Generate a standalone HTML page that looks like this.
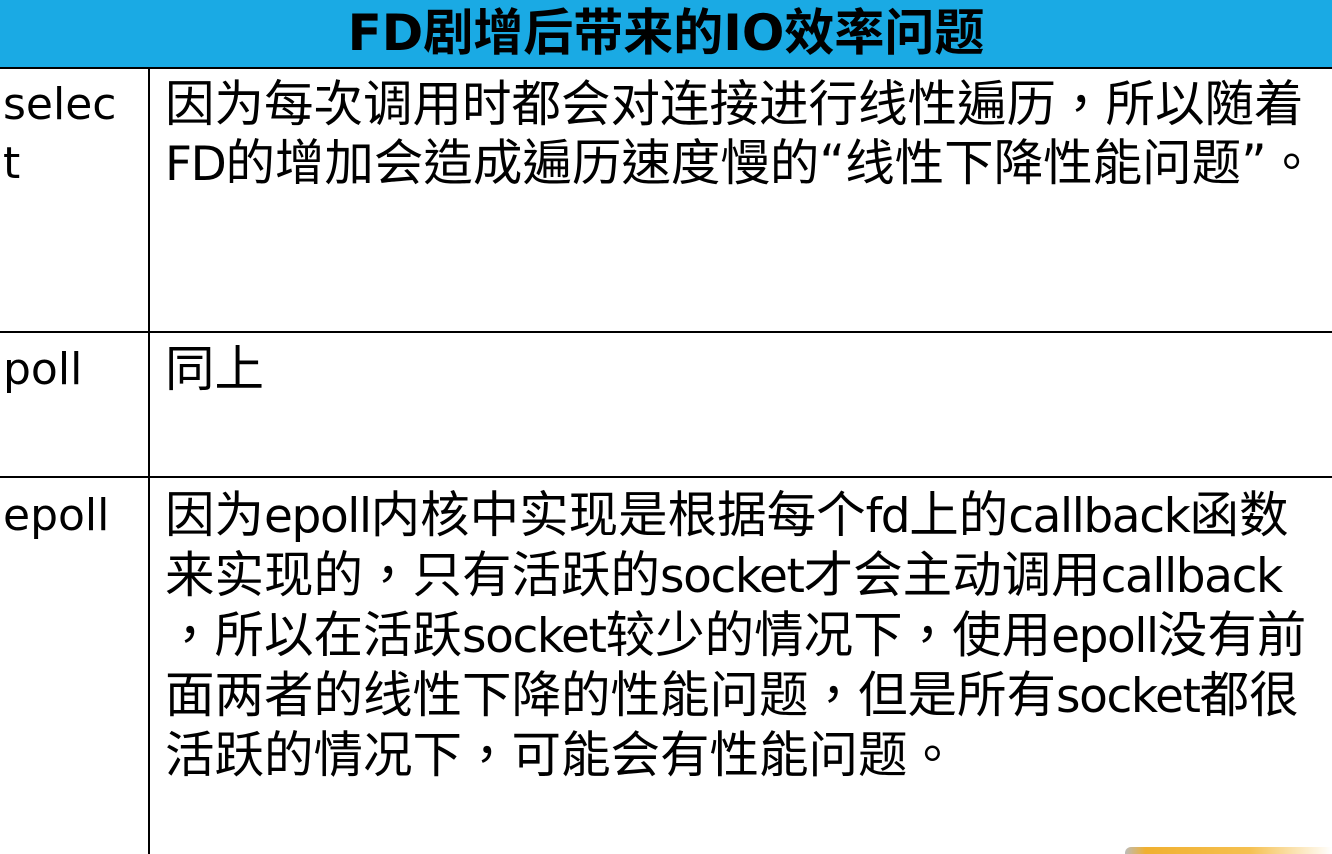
<!DOCTYPE html>
<html><head><meta charset="utf-8"><style>
body{margin:0;width:1332px;height:854px;overflow:hidden;background:#fff;position:relative;font-family:"DejaVu Sans","Noto Sans CJK TC",sans-serif;color:#000}
.hdr{position:absolute;left:0;top:0;width:1332px;height:67px;background:#1aaae4;border-bottom:2px solid #000;text-align:center;font-weight:bold;font-size:50px;line-height:66px;white-space:nowrap}
.h{position:absolute;left:0;width:1332px;height:2px;background:#000}
.v{position:absolute;left:148px;top:69px;width:2px;height:785px;background:#000}
.t{position:absolute;font-size:49.5px;line-height:59px;white-space:nowrap;letter-spacing:0}
.e{font-size:47px;letter-spacing:-1.4px}
.l{position:absolute;left:3px;font-size:44px;line-height:59px;white-space:nowrap}
</style></head><body>
<div class="hdr">FD剧增后带来的IO效率问题</div>
<div class="v"></div>
<div class="h" style="top:331px"></div>
<div class="h" style="top:476px"></div>
<div class="l" style="top:75px">selec<br>t</div>
<div class="t" style="left:165px;top:75px">因为每次调用时都会对连接进行线性遍历，所以随着<br><span class="e">FD</span>的增加会造成遍历速度慢的“线性下降性能问题”。</div>
<div class="l" style="top:340px">poll</div>
<div class="t" style="left:165px;top:340px">同上</div>
<div class="l" style="top:486px">epoll</div>
<div class="t" style="left:165px;top:486px">因为<span class="e">epoll</span>内核中实现是根据每个<span class="e">fd</span>上的<span class="e">callback</span>函数<br>来实现的，只有活跃的<span class="e">socket</span>才会主动调用<span class="e">callback</span><br>，所以在活跃<span class="e">socket</span>较少的情况下，使用<span class="e">epoll</span>没有前<br>面两者的线性下降的性能问题，但是所有<span class="e">socket</span>都很<br>活跃的情况下，可能会有性能问题。</div>
<div style="position:absolute;left:1125px;top:847px;width:207px;height:7px;background:linear-gradient(90deg,#bbb 0,#f0b030 10%,#f5c050 60%,#fff 100%);border-radius:6px 0 0 0"></div>
</body></html>
